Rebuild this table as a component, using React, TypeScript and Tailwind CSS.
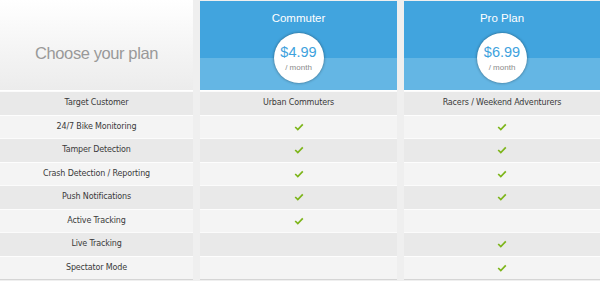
const features: { label: string; commuter: string | boolean; pro: string | boolean }[] = [
  { label: 'Target Customer', commuter: 'Urban Commuters', pro: 'Racers / Weekend Adventurers' },
  { label: '24/7 Bike Monitoring', commuter: true, pro: true },
  { label: 'Tamper Detection', commuter: true, pro: true },
  { label: 'Crash Detection / Reporting', commuter: true, pro: true },
  { label: 'Push Notifications', commuter: true, pro: true },
  { label: 'Active Tracking', commuter: true, pro: false },
  { label: 'Live Tracking', commuter: false, pro: true },
  { label: 'Spectator Mode', commuter: false, pro: true },
];

const plans = [
  { name: 'Commuter', price: '$4.99' },
  { name: 'Pro Plan', price: '$6.99' },
];

function Check() {
  return (
    <svg width="10" height="8" viewBox="0 0 10 8">
      <path d="M1.2 4 L3.8 6.6 L8.8 1.4" fill="none" stroke="#7db51a" strokeWidth="1.7" />
    </svg>
  );
}

function Cell({ value, bg }: { value: string | boolean; bg: string }) {
  return (
    <div className={`h-[23.5px] border-t border-white/80 flex items-center justify-center text-[#3a3a3a] tracking-[-0.15px] ${bg}`}>
      {value === true ? <Check /> : value === false ? null : value}
    </div>
  );
}

export default function App() {
  return (
    <div className="w-[600px] h-[281px] overflow-hidden bg-[#efefef] font-['DejaVu_Sans',sans-serif] text-[8px]">
      {/* Header */}
      <div className="grid grid-cols-[193px_197px_196px] gap-x-[7px]">
        <div className="h-[91px] bg-gradient-to-b from-white to-[#ececec] flex items-center justify-center border-b border-white">
          <span className="font-['Liberation_Sans',Arial,sans-serif] text-[16.5px] tracking-[-0.4px] text-[#999999] mt-[16px]">
            Choose your plan
          </span>
        </div>
        {plans.map((plan) => (
          <div key={plan.name} className="h-[91px] pt-px">
            <div className="relative h-[90px] border-b border-white flex flex-col">
              <div className="h-[57px] bg-[#41a4de]" />
              <div className="flex-1 bg-[#64b6e4]" />
              <div className="absolute inset-x-0 top-[9px] text-center font-['Liberation_Sans',Arial,sans-serif] text-[11.5px] text-white">
                {plan.name}
              </div>
              <div className="absolute left-1/2 top-[32px] -translate-x-1/2 w-[50px] h-[50px] rounded-full bg-white shadow-[0_0_3px_rgba(0,0,0,0.45)] flex flex-col items-center font-['Liberation_Sans',Arial,sans-serif]">
                <span className="mt-[12px] text-[14.5px] leading-none text-[#3ea2dd]">{plan.price}</span>
                <span className="mt-[4px] text-[8px] leading-none text-[#8a8a8a]">/ month</span>
              </div>
            </div>
          </div>
        ))}
      </div>

      {/* Feature rows */}
      <div className="grid grid-cols-[193px_197px_196px] gap-x-[7px]">
        {features.map((f, i) => {
          const bg = i % 2 === 0 ? 'bg-[#e9e9e9]' : 'bg-[#f4f4f4]';
          return (
            <div key={f.label} className="contents">
              <Cell value={f.label} bg={bg} />
              <Cell value={f.commuter} bg={bg} />
              <Cell value={f.pro} bg={bg} />
            </div>
          );
        })}
        <div className="h-px bg-[#d5d5d5]" />
        <div className="h-px bg-[#d5d5d5]" />
        <div className="h-px bg-[#d5d5d5]" />
      </div>
    </div>
  );
}
